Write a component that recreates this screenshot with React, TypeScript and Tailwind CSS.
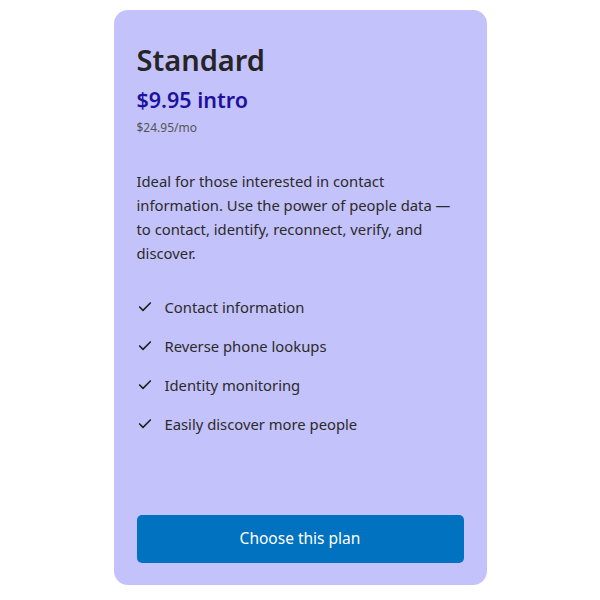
import { Check } from 'lucide-react';

const features = [
  'Contact information',
  'Reverse phone lookups',
  'Identity monitoring',
  'Easily discover more people',
];

export default function App() {
  return (
    <div className="flex justify-center pt-[10px] w-full font-['Noto_Sans',sans-serif]">
      <div className="flex flex-col w-[373px] h-[575px] rounded-[14px] bg-[#c4c2fa] px-[23px] pt-[30px] pb-[22px]">
        <h2 className="text-[29px] leading-[40px] font-semibold text-[#252525]">Standard</h2>
        <p className="mt-[6px] text-[21.5px] leading-[28px] font-semibold text-[#1d12a0]">$9.95 intro</p>
        <p className="mt-[6px] text-[12px] leading-[16px] text-[#555]">$24.95/mo</p>

        <p className="mt-[33px] text-[14.8px] leading-[24px] text-[#2b2b2b]">
          Ideal for those interested in contact information. Use the power of people data — to contact,
          identify, reconnect, verify, and discover.
        </p>

        <ul className="mt-[30px] flex flex-col gap-[15px]">
          {features.map((f) => (
            <li key={f} className="flex items-center gap-[12px] text-[14.8px] leading-[24px] text-[#2b2b2b]">
              <Check className="w-[16px] h-[16px] text-[#222]" strokeWidth={2.5} />
              <span>{f}</span>
            </li>
          ))}
        </ul>

        <button className="mt-auto h-[48px] w-full rounded-[5px] bg-[#0072bf] text-white text-[15.5px]">
          Choose this plan
        </button>
      </div>
    </div>
  );
}
